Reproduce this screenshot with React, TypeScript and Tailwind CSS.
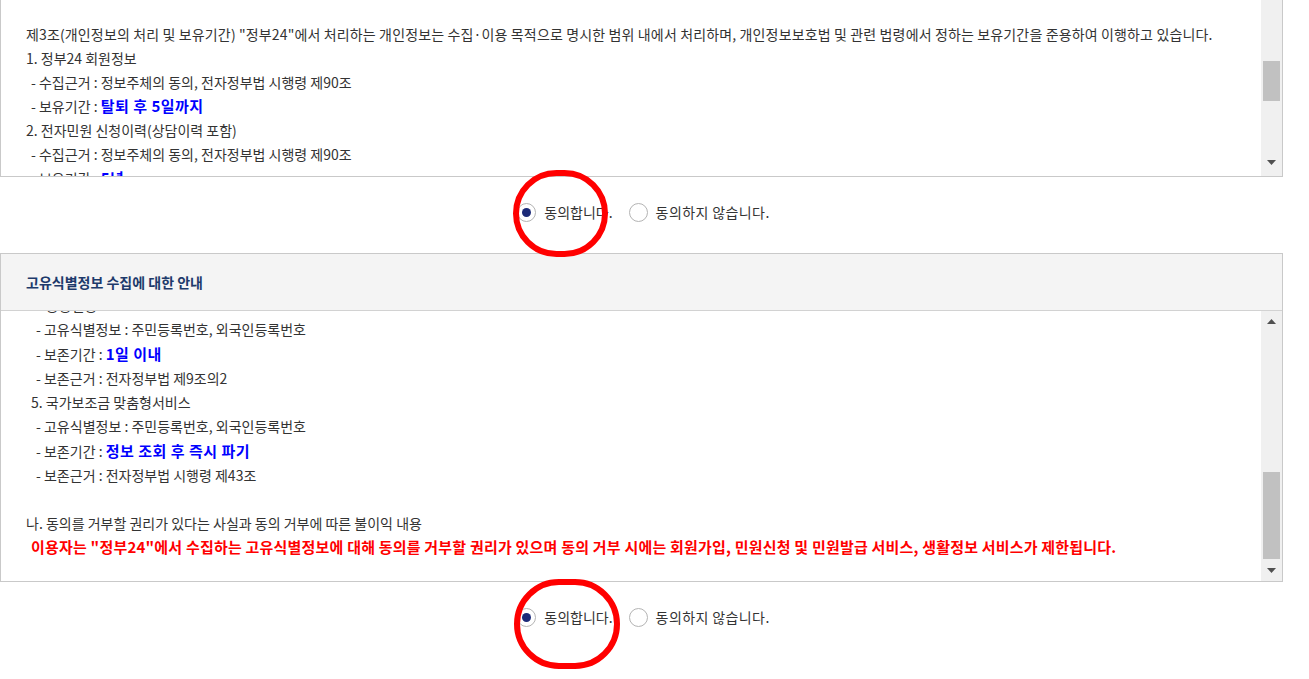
import type { ReactNode } from 'react';

function UpArrow() {
  return (
    <svg width="9" height="5" viewBox="0 0 9 5">
      <path d="M0 5L4.5 0L9 5Z" fill="#505050" />
    </svg>
  );
}

function DownArrow() {
  return (
    <svg width="9" height="5" viewBox="0 0 9 5">
      <path d="M0 0L9 0L4.5 5Z" fill="#505050" />
    </svg>
  );
}

function Line({ children, className = '', tall = false }: { children?: ReactNode; className?: string; tall?: boolean }) {
  return (
    <div className={`${tall ? 'h-[25px] leading-[25px]' : 'h-[24px] leading-[24px]'} whitespace-nowrap ${className}`}>
      {children}
    </div>
  );
}

function Em({ children }: { children: ReactNode }) {
  return <span className="text-[15px] font-bold tracking-[0.5px] text-[#0000ff]">{children}</span>;
}

function RadioRow({ circle }: { circle: string }) {
  return (
    <div className="relative h-[76px] flex justify-center items-start pt-[25px] pl-[4px]">
      <div className="flex items-center text-[14px] text-[#333]">
        <span className="w-[19px] h-[19px] rounded-full border border-[#b4b4b4] bg-white flex items-center justify-center">
          <span className="w-[9px] h-[9px] rounded-full bg-[#1c2a78]" />
        </span>
        <span className="ml-[8px]">동의합니다.</span>
        <span className="ml-[16px] w-[19px] h-[19px] rounded-full border border-[#b4b4b4] bg-white" />
        <span className="ml-[8px] tracking-[0.4px]">동의하지 않습니다.</span>
      </div>
      <div className={`absolute z-10 rounded-full border-[6px] border-[#ff0000] pointer-events-none ${circle}`} />
    </div>
  );
}

export default function App() {
  return (
    <div className="w-[1309px] h-[679px] overflow-hidden bg-white text-[#333] font-['Noto_Sans_CJK_KR','Noto_Sans',sans-serif]">
      <div className="w-[1283px]">
        {/* 개인정보 처리 및 보유기간 */}
        <div className="flex h-[177px] border-x border-b border-[#c9c9c9]">
          <div className="flex-1 overflow-hidden pl-[25px] pt-[22px] text-[14px]">
            <Line className="tracking-[0.14px]">제3조(개인정보의 처리 및 보유기간) "정부24"에서 처리하는 개인정보는 수집·이용 목적으로 명시한 범위 내에서 처리하며, 개인정보보호법 및 관련 법령에서 정하는 보유기간을 준용하여 이행하고 있습니다.</Line>
            <Line>1. 정부24 회원정보</Line>
            <Line className="pl-[5px]">- 수집근거 : 정보주체의 동의, 전자정부법 시행령 제90조</Line>
            <Line className="pl-[5px]">- 보유기간 : <Em>탈퇴 후 5일까지</Em></Line>
            <Line>2. 전자민원 신청이력(상담이력 포함)</Line>
            <Line className="pl-[5px]">- 수집근거 : 정보주체의 동의, 전자정부법 시행령 제90조</Line>
            <Line className="pl-[5px]">- 보유기간 : <Em>5년</Em></Line>
          </div>
          <div className="w-[21px] bg-[#f0f0f0] flex flex-col">
            <div className="h-[61px]" />
            <div className="ml-[2px] w-[17px] h-[40px] bg-[#c1c1c1]" />
            <div className="flex-1" />
            <div className="h-[21px] mb-[3px] flex items-center justify-center">
              <DownArrow />
            </div>
          </div>
        </div>

        <RadioRow circle="left-[513px] -top-[7px] w-[95px] h-[87px]" />

        {/* 고유식별정보 수집에 대한 안내 */}
        <div className="border border-[#c9c9c9]">
          <div className="h-[57px] bg-[#f4f4f4] border-b border-[#d2d2d2] flex items-center pl-[25px]">
            <span className="text-[14px] font-bold text-[#1d3a6b]">고유식별정보 수집에 대한 안내</span>
          </div>
          <div className="flex h-[270px]">
            <div className="flex-1 overflow-hidden pl-[25px] text-[14px]">
              <div className="-mt-[18px]">
                <Line className="pl-[5px]">4. 공동인증</Line>
                <Line className="pl-[10px]">- 고유식별정보 : 주민등록번호, 외국인등록번호</Line>
                <Line tall className="pl-[10px]">- 보존기간 : <Em>1일 이내</Em></Line>
                <Line className="pl-[10px]">- 보존근거 : 전자정부법 제9조의2</Line>
                <Line className="pl-[5px]">5. 국가보조금 맞춤형서비스</Line>
                <Line className="pl-[10px]">- 고유식별정보 : 주민등록번호, 외국인등록번호</Line>
                <Line tall className="pl-[10px]">- 보존기간 : <Em>정보 조회 후 즉시 파기</Em></Line>
                <Line className="pl-[10px]">- 보존근거 : 전자정부법 시행령 제43조</Line>
                <Line />
                <Line>나. 동의를 거부할 권리가 있다는 사실과 동의 거부에 따른 불이익 내용</Line>
                <Line className="pl-[5px] text-[15px] font-bold tracking-[0.2px] text-[#ff0000]">
                  이용자는 "정부24"에서 수집하는 고유식별정보에 대해 동의를 거부할 권리가 있으며 동의 거부 시에는 회원가입, 민원신청 및 민원발급 서비스, 생활정보 서비스가 제한됩니다.
                </Line>
              </div>
            </div>
            <div className="w-[21px] bg-[#f0f0f0] flex flex-col">
              <div className="h-[21px] flex items-center justify-center">
                <UpArrow />
              </div>
              <div className="h-[140px]" />
              <div className="ml-[2px] w-[17px] h-[87px] bg-[#c1c1c1]" />
              <div className="flex-1" />
              <div className="h-[21px] flex items-center justify-center">
                <DownArrow />
              </div>
            </div>
          </div>
        </div>

        <RadioRow circle="left-[514px] -top-[3px] w-[106px] h-[90px]" />
      </div>
    </div>
  );
}
